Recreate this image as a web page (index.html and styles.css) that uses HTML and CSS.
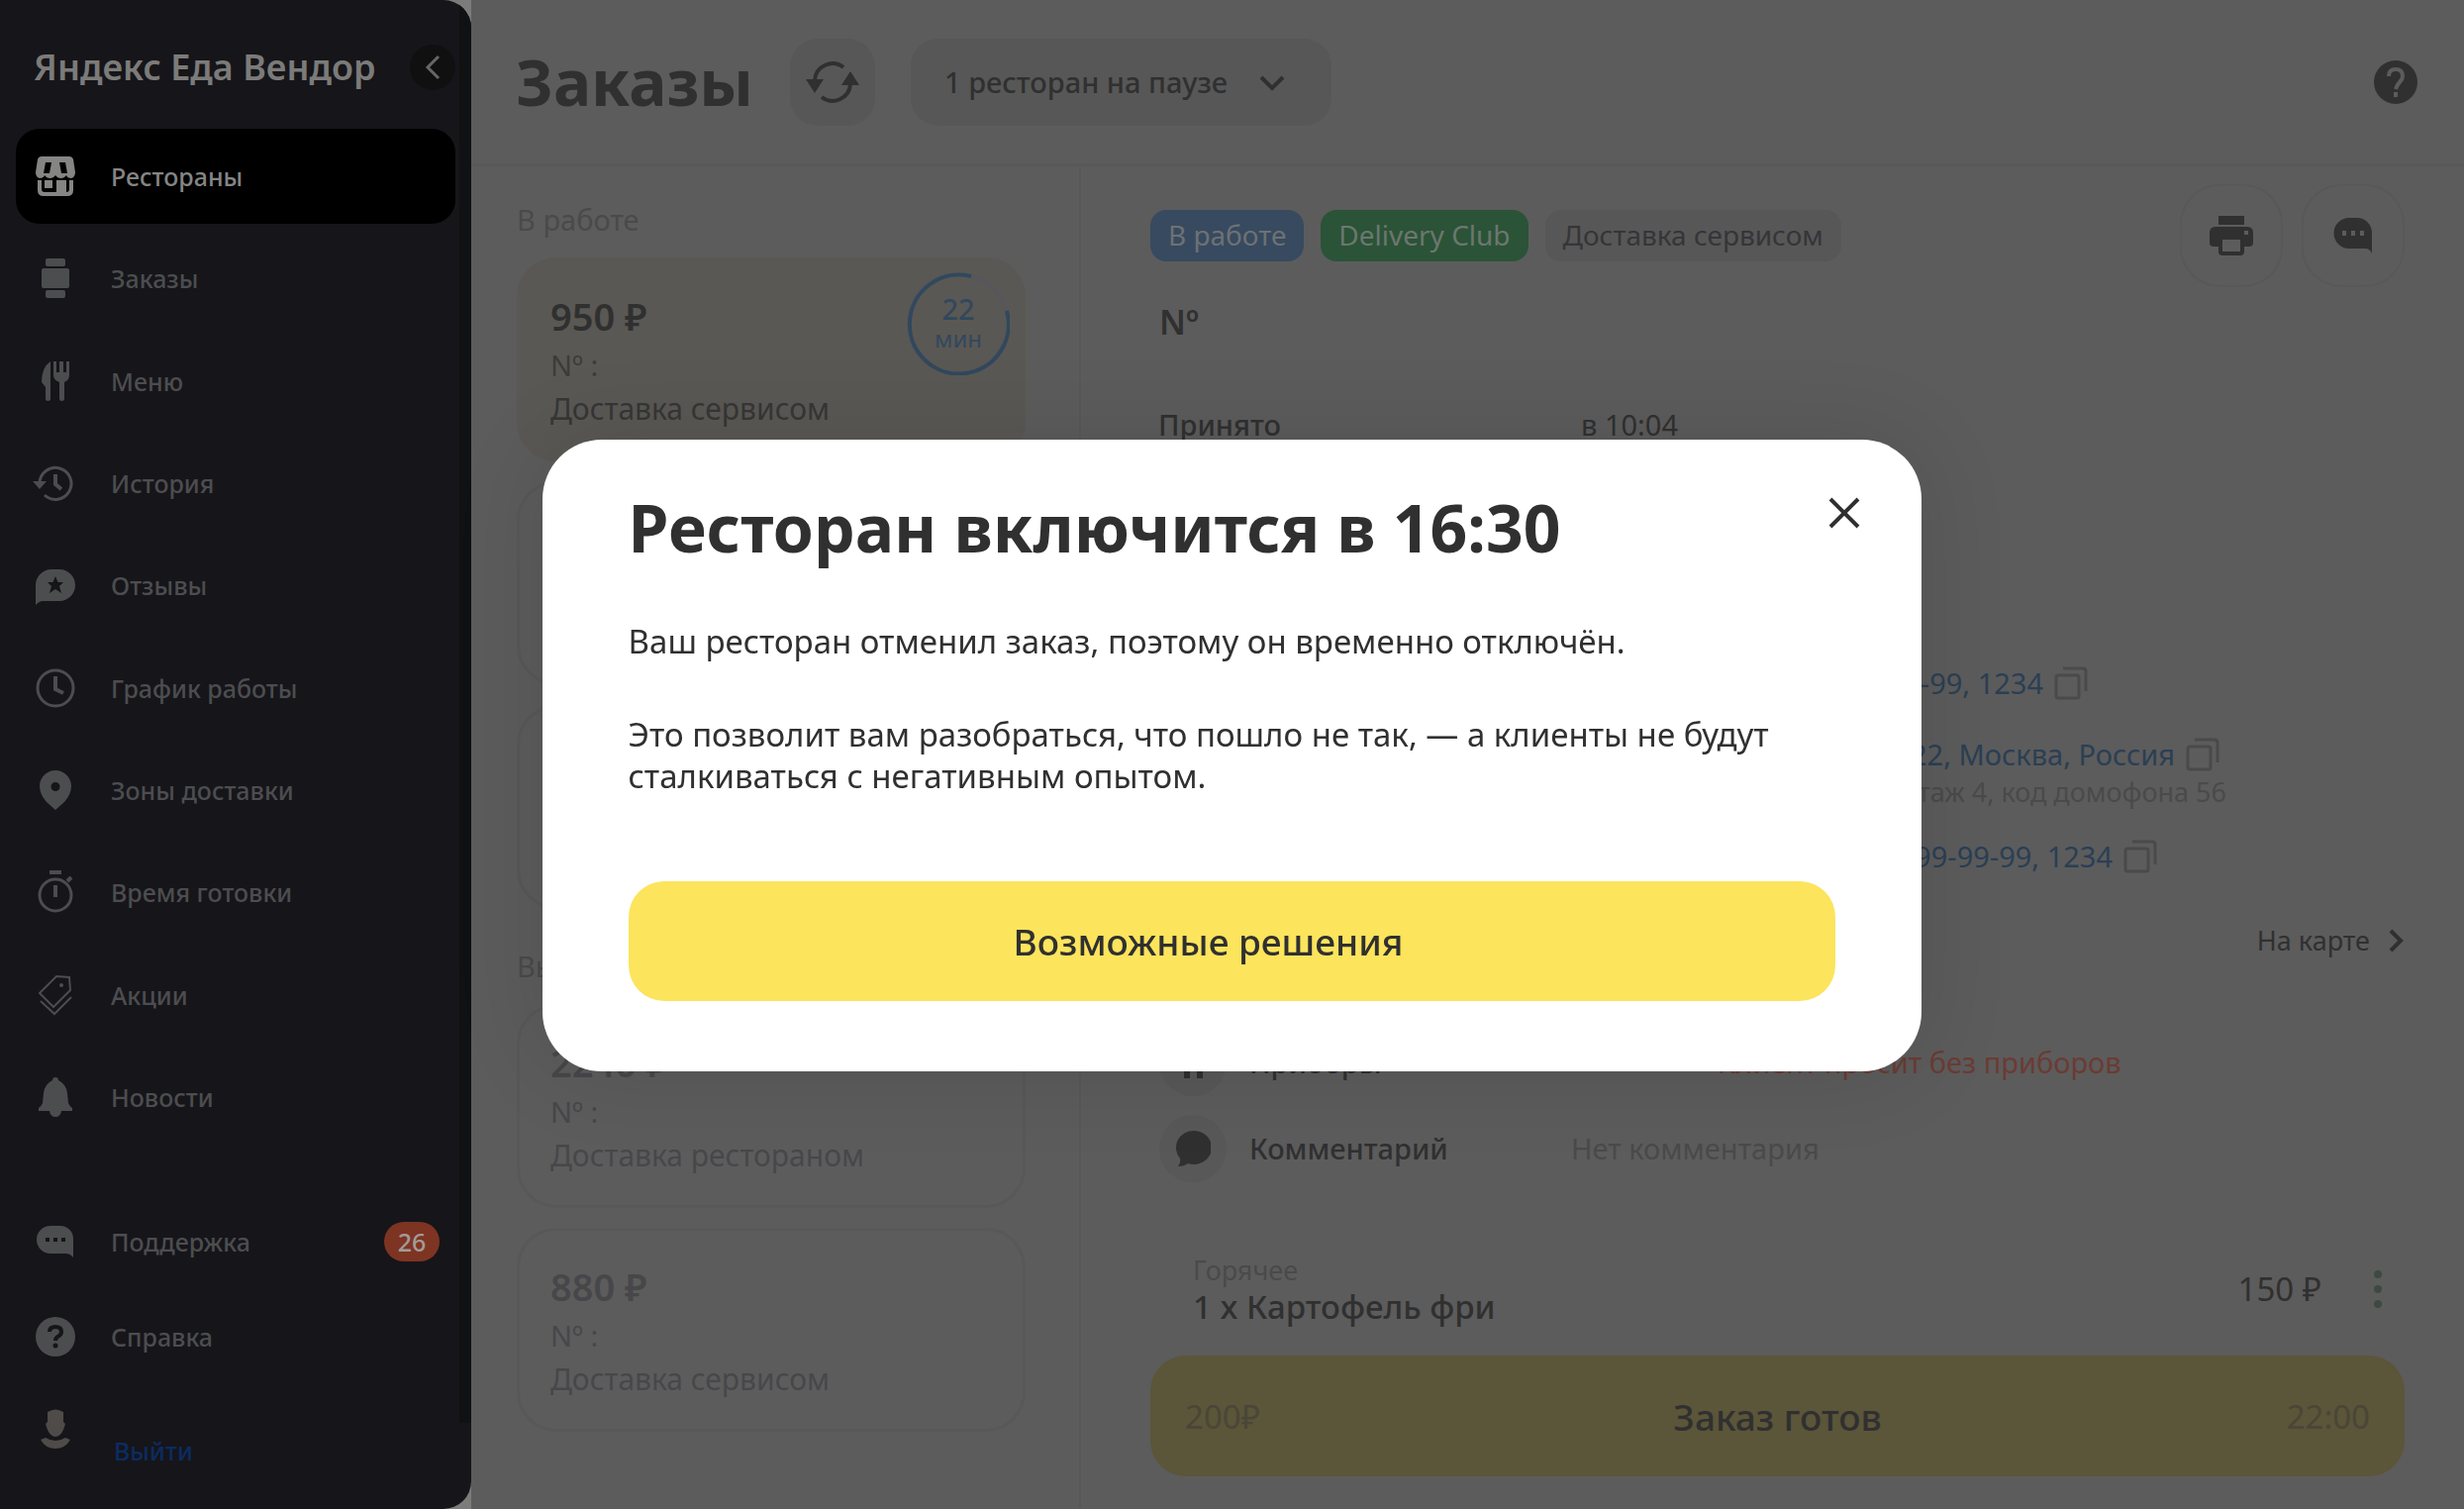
FILE: index.html
```html
<!DOCTYPE html>
<html lang="ru">
<head>
  <meta charset="UTF-8" />
  <meta name="viewport" content="width=device-width, initial-scale=1.0" />
  <title>Яндекс Еда Вендор - Заказы</title>
  <link rel="stylesheet" href="styles.css">
</head>
<body>
<div class="app">

  <div class="sidebar-wrap">
  <aside class="sidebar">
    <div class="sidebar-head">
      <span class="brand">Яндекс Еда Вендор</span>
      <button class="collapse" aria-label="Свернуть меню">
        <svg width="16" height="26" viewBox="0 0 16 26" fill="none" stroke="currentColor" stroke-width="3"><path d="M14 2L3 13l11 11"/></svg>
      </button>
    </div>

    <nav class="menu">
      <a href="#" class="menu-item active">
        <svg class="icon" viewBox="0 0 40 40" fill="currentColor"><path fill-rule="evenodd" d="M6 0h28q3 0 4 3l2 13q0 5-4 6-4 0-5-3-2 3-5.500 3T20 19q-2 3-5.500 3T9 19q-1 3-5 3-4-1-4-6L2 3q1-3 4-3zM10 6L8 17h6l2-11zM24 6l2 11h6L30 6z"/><path fill-rule="evenodd" d="M2 24h4v9q0 3 3 3h12V24h10v12q3 0 3-3v-9h4v10q0 6-6 6H8q-6 0-6-6z"/><path d="M9 24h8v8H9z"/></svg>
        <span>Рестораны</span>
      </a>
      <a href="#" class="menu-item">
        <svg class="icon" viewBox="0 0 40 40" fill="currentColor"><rect x="10" y="0" width="20" height="8" rx="2"/><rect x="6" y="10" width="28" height="20" rx="2"/><rect x="10" y="32" width="20" height="8" rx="2"/></svg>
        <span>Заказы</span>
      </a>
      <a href="#" class="menu-item">
        <svg class="icon" viewBox="0 0 40 40" fill="currentColor"><path d="M15 0v38q0 2-2.500 2T10 38V26l-4-5Q6 6 15 0z"/><path d="M18 0h3v11h3V0h4v11h3V0h3v14q0 5-5 7v17q0 2-2.500 2T24 38V21q-6-2-6-7z"/></svg>
        <span>Меню</span>
      </a>
      <a href="#" class="menu-item">
        <svg class="icon" viewBox="0 0 40 40" fill="none" stroke="currentColor" stroke-width="3"><path d="M4 20a16 16 0 1 1 5 12"/><path d="M20 11v10l6 5" stroke-width="4"/><path d="M-3 18h14l-7 8z" fill="currentColor" stroke="none"/></svg>
        <span>История</span>
      </a>
      <a href="#" class="menu-item">
        <svg class="icon" viewBox="0 0 40 40" fill="currentColor"><path fill-rule="evenodd" d="M16 4h8a16 16 0 0 1 0 32H7q-3 0-7 4V20A16 16 0 0 1 16 4zM20 11l-2.500 6H12l4 4-2 7 6-4 6 4-2-7 4-4h-5.500z"/></svg>
        <span>Отзывы</span>
      </a>
      <a href="#" class="menu-item">
        <svg class="icon" viewBox="0 0 40 40" fill="none" stroke="currentColor" stroke-width="3"><circle cx="20" cy="20" r="18"/><path d="M20 8v13l8 4" stroke-width="4"/></svg>
        <span>График работы</span>
      </a>
      <a href="#" class="menu-item">
        <svg class="icon" viewBox="0 0 40 40" fill="currentColor"><path fill-rule="evenodd" d="M20 0a16 16 0 0 1 16 16q0 8-7 16l-9 8-9-8Q4 24 4 16A16 16 0 0 1 20 0zm0 12a4.500 4.500 0 1 0 0 9 4.500 4.500 0 0 0 0-9z"/></svg>
        <span>Зоны доставки</span>
      </a>
      <a href="#" class="menu-item">
        <svg class="icon" viewBox="0 0 40 40" fill="none" stroke="currentColor" stroke-width="3"><circle cx="20" cy="23" r="16"/><path d="M20 13v12M14 0h12M32 9l4-4" stroke-width="4"/></svg>
        <span>Время готовки</span>
      </a>
      <a href="#" class="menu-item">
        <svg class="icon" viewBox="0 0 40 40" fill="none" stroke="currentColor" stroke-width="2"><path d="M21 1l13 1 1 13-17 17L4 18z"/><path d="M5 26l14 13 17-17"/><circle cx="26" cy="10" r="2" fill="currentColor" stroke="none"/></svg>
        <span>Акции</span>
      </a>
      <a href="#" class="menu-item">
        <svg class="icon" viewBox="0 0 40 40" fill="currentColor"><path d="M20 0q3 0 3 3 8 4 9 13l1 10q1 3 4 5v3H26q-1 6-6 6t-6-6H3v-3q3-2 4-5l1-10q1-9 9-13 0-3 3-3z"/></svg>
        <span>Новости</span>
      </a>
    </nav>

    <div class="menu-bottom">
      <a href="#" class="menu-item">
        <svg class="icon" viewBox="0 0 40 40" fill="currentColor"><path fill-rule="evenodd" d="M15 4h10a13 13 0 0 1 13 13v19q-3-4-8-4H15A14 14 0 0 1 15 4zM10 16v4h4v-4zm8 0v4h4v-4zm8 0v4h4v-4z"/></svg>
        <span>Поддержка</span>
        <span class="count">26</span>
      </a>
      <a href="#" class="menu-item">
        <svg class="icon" viewBox="0 0 40 40"><circle cx="20" cy="20" r="20" fill="currentColor"/><path d="M14 15q0-5 6-5t6 5q0 3-3 4.500T20 24" fill="none" stroke="#16151a" stroke-width="4"/><circle cx="20" cy="29" r="2.500" fill="#16151a"/></svg>
        <span>Справка</span>
      </a>
      <a href="#" class="menu-item logout">
        <svg class="icon" viewBox="0 0 40 40" fill="currentColor"><path d="M12 3q8-5 16 0v10l2 2-2 6q-3 7-8 7t-8-7l-2-6 2-2z"/><path d="M5 31l5-2q10 6 20 0l5 2q-5 9-15 9T5 31z"/></svg>
        <span>Выйти</span>
      </a>
    </div>
  </aside>
  </div>

  <main class="main">
    <header class="topbar">
      <h1>Заказы</h1>
      <button class="refresh" aria-label="Обновить">
        <svg width="54" height="42" viewBox="0 0 54 42" fill="none" stroke="currentColor" stroke-width="4"><path d="M9 19A18 18 0 0 1 38 6M45 23a18 18 0 0 1-29 13"/><path d="M0 18h18l-9 14zM36 24h18L45 10z" fill="currentColor" stroke="none"/></svg>
      </button>
      <div class="pause">
        <select aria-label="Рестораны на паузе">
          <option>1 ресторан на паузе</option>
        </select>
        <svg width="26" height="18" viewBox="0 0 26 18" fill="none" stroke="currentColor" stroke-width="4"><path d="M2 3l11 11L24 3"/></svg>
      </div>
      <button class="help" aria-label="Помощь">
        <svg width="44" height="44" viewBox="0 0 44 44"><circle cx="22" cy="22" r="22" fill="#303030"/><path d="M15 16q0-7 7-7t7 7q0 3-3 6t-4 7" fill="none" stroke="#5c5c5c" stroke-width="4"/><path d="M20 32h4v5h-4z" fill="#5c5c5c"/></svg>
      </button>
    </header>

    <div class="content">
      <section class="orders">
        <h2>В работе</h2>
        <article class="card selected">
          <p class="price">950 ₽</p>
          <p class="num">Nº :</p>
          <p class="delivery">Доставка сервисом</p>
          <div class="timer">
            <svg viewBox="0 0 104 104" fill="none" stroke-width="4"><circle cx="52" cy="52" r="50" stroke="#55575a"/><path d="M101 39A50 50 0 1 1 65 4" stroke="#31485d"/></svg>
            <b>22</b>
            <span>мин</span>
          </div>
        </article>
        <article class="card"></article>
        <article class="card"></article>
        <h2 class="next">Выданы</h2>
        <article class="card muted">
          <p class="price">2240 ₽</p>
          <p class="num">Nº :</p>
          <p class="delivery">Доставка рестораном</p>
        </article>
        <article class="card muted">
          <p class="price">880 ₽</p>
          <p class="num">Nº :</p>
          <p class="delivery">Доставка сервисом</p>
        </article>
      </section>

      <section class="details">
        <div class="details-head">
          <span class="tag blue">В работе</span>
          <span class="tag green">Delivery Club</span>
          <span class="tag">Доставка сервисом</span>
          <div class="actions">
            <button aria-label="Печать">
              <svg width="44" height="40" viewBox="0 0 44 40" fill="currentColor"><path d="M9 0h26v9H9z"/><path fill-rule="evenodd" d="M6 11h32q6 0 6 6v10q0 4-4 4h-5v5q0 4-4 4H13q-4 0-4-4v-5H4q-4 0-4-4V17q0-6 6-6zm7 13v12h18V24zm22-9v4h4v-4z"/></svg>
            </button>
            <button aria-label="Чат">
              <svg width="40" height="36" viewBox="0 0 40 36" fill="currentColor"><path fill-rule="evenodd" d="M16 0h8a15 15 0 0 1 15 15v21q-2-5-7-5H16A15.500 15.500 0 0 1 16 0zM9 13v5h4v-5zm9 0v5h4v-5zm9 0v5h4v-5z"/></svg>
            </button>
          </div>
        </div>

        <h3>Nº</h3>
        <div class="status">
          <span class="status-name">Принято</span>
          <span>в 10:04</span>
        </div>

        <div class="contacts">
          <div class="contact">
            <a href="#" class="phone">+7 999 999-99-99, 1234</a>
            <button class="copy" aria-label="Скопировать"><svg width="34" height="34" viewBox="0 0 34 34" fill="none" stroke="currentColor" stroke-width="3"><rect x="2" y="9" width="23" height="23" rx="2"/><path d="M9 2h20q3 0 3 3v20"/></svg></button>
          </div>
          <div class="contact">
            <a href="#" class="address">улица Льва Толстого, 22, Москва, Россия</a>
            <button class="copy" aria-label="Скопировать"><svg width="34" height="34" viewBox="0 0 34 34" fill="none" stroke="currentColor" stroke-width="3"><rect x="2" y="9" width="23" height="23" rx="2"/><path d="M9 2h20q3 0 3 3v20"/></svg></button>
          </div>
          <p class="entrance">подъезд 3, этаж 4, код домофона 56</p>
          <div class="contact">
            <a href="#" class="courier">+7 999 999-99-99, 1234</a>
            <button class="copy" aria-label="Скопировать"><svg width="34" height="34" viewBox="0 0 34 34" fill="none" stroke="currentColor" stroke-width="3"><rect x="2" y="9" width="23" height="23" rx="2"/><path d="M9 2h20q3 0 3 3v20"/></svg></button>
          </div>
        </div>

        <a href="#" class="map-link">На карте
          <svg width="16" height="24" viewBox="0 0 16 24" fill="none" stroke="currentColor" stroke-width="4"><path d="M2 2l10 10L2 22"/></svg>
        </a>

        <div class="note">
          <span class="round"><svg width="28" height="32" viewBox="0 0 28 32" fill="currentColor"><path d="M5 0h6v32H5zM18 0h6v32h-6z"/></svg></span>
          <span class="note-label">Приборы</span>
          <span class="note-value red">Клиент просит без приборов</span>
        </div>
        <div class="note">
          <span class="round"><svg width="36" height="36" viewBox="0 0 36 36" fill="currentColor"><path d="M18 0a18 17 0 1 1-5 33q-4 3-10 3 3-4 2-8A17 17 0 0 1 18 0z"/></svg></span>
          <span class="note-label">Комментарий</span>
          <span class="note-value">Нет комментария</span>
        </div>

        <div class="item">
          <div>
            <p class="category">Горячее</p>
            <p class="name">1 x Картофель фри</p>
          </div>
          <span class="item-price">150 ₽</span>
          <button class="more" aria-label="Ещё"><svg width="10" height="40" viewBox="0 0 10 40" fill="currentColor"><circle cx="5" cy="5" r="4"/><circle cx="5" cy="20" r="4"/><circle cx="5" cy="35" r="4"/></svg></button>
        </div>

        <button class="ready">
          <span>200₽</span>
          <strong>Заказ готов</strong>
          <span>22:00</span>
        </button>
      </section>
    </div>
  </main>
</div>

<div class="overlay">
  <div class="modal" role="dialog" aria-labelledby="modal-title">
    <button class="close" aria-label="Закрыть"><svg width="32" height="32" viewBox="0 0 32 32" fill="none" stroke="currentColor" stroke-width="4"><path d="M2 2l28 28M30 2L2 30"/></svg></button>
    <h2 id="modal-title">Ресторан включится в 16:30</h2>
    <p>Ваш ресторан отменил заказ, поэтому он временно отключён.</p>
    <p>Это позволит вам разобраться, что пошло не так, — а клиенты не будут сталкиваться с негативным опытом.</p>
    <button class="solutions">Возможные решения</button>
  </div>
</div>
</body>
</html>
```
FILE: styles.css
```css
* {
  box-sizing: border-box;
}
body {
  margin: 0;
  font-family: "Noto Sans", "Open Sans", sans-serif;
  font-size: 29px;
  line-height: 40px;
  background: #5c5c5c;
  color: #303030;
}
h1, h2, h3, p {
  margin: 0;
}
a {
  text-decoration: none;
  color: inherit;
}
button, select {
  font-family: inherit;
  color: inherit;
  border: 0;
  background: none;
  padding: 0;
}
svg {
  display: block;
}
.app {
  display: flex;
  min-height: 100vh;
}

/* sidebar */
.sidebar-wrap {
  flex: none;
  width: 476px;
  background: #7c7c7b;
}
.sidebar {
  position: relative;
  display: flex;
  flex-direction: column;
  height: 100%;
  padding: 0 16px;
  background: #16151a;
  border-radius: 0 28px 28px 0;
  overflow: hidden;
}
.sidebar::after {
  content: "";
  position: absolute;
  top: 0;
  right: 0;
  bottom: 87px;
  width: 12px;
  background: #101112;
}
.sidebar-head, .menu, .menu-bottom {
  width: 444px;
}
.sidebar-head {
  display: flex;
  align-items: center;
  justify-content: space-between;
  height: 130px;
  padding: 6px 0 0 18px;
}
.brand {
  font-size: 36px;
  font-weight: 600;
  color: #7b7b79;
}
.collapse {
  display: flex;
  align-items: center;
  justify-content: center;
  width: 46px;
  height: 46px;
  border-radius: 50%;
  background: #101010;
  color: #66666a;
}
.menu {
  display: flex;
  flex: 1;
  flex-direction: column;
  justify-content: space-between;
  margin-bottom: 50px;
}
.menu-item {
  display: flex;
  align-items: center;
  height: 96px;
  padding: 0 16px 0 20px;
  border-radius: 24px;
  font-size: 25px;
  font-weight: 500;
  color: #4c4d4f;
}
.menu-item.active {
  background: #000;
  color: #858584;
}
.icon {
  width: 40px;
  height: 40px;
  margin-right: 36px;
  overflow: visible;
}
.count {
  width: 56px;
  margin-left: auto;
  border-radius: 20px;
  background: #7e3422;
  color: #a39b98;
  text-align: center;
}
.menu-item.logout {
  align-items: flex-start;
  height: 126px;
  padding-top: 25px;
  color: #4f4b49;
}
.logout span {
  margin-top: 22px;
  padding-left: 3px;
  color: #0b2c60;
}

/* top bar */
.main {
  display: flex;
  flex: 1;
  flex-direction: column;
}
.topbar {
  display: flex;
  align-items: center;
  height: 168px;
  padding: 0 47px 0 45px;
  border-bottom: 3px solid #575957;
}
h1 {
  margin-right: 37px;
  font-size: 64px;
  font-weight: 700;
}
.refresh {
  display: flex;
  align-items: center;
  justify-content: center;
  width: 86px;
  height: 88px;
  margin-right: 36px;
  border-radius: 28px;
  background: #575757;
}
.pause {
  position: relative;
}
.pause select {
  height: 88px;
  padding: 0 104px 0 34px;
  border-radius: 28px;
  background: #575757;
  font-size: 29px;
  font-weight: 500;
  appearance: none;
}
.pause svg {
  position: absolute;
  top: 36px;
  right: 47px;
  pointer-events: none;
}
.help {
  margin-left: auto;
}
.content {
  display: flex;
  flex: 1;
}

/* orders list */
.orders {
  flex: none;
  width: 616px;
  padding: 34px 54px 0 46px;
  border-right: 2px solid #575957;
}
.orders h2 {
  margin-bottom: 18px;
  font-size: 29px;
  font-weight: 400;
  color: #4a4a4a;
}
.orders .next {
  margin-top: 38px;
}
.card {
  position: relative;
  height: 206px;
  padding: 31px;
  border: 3px solid #575957;
  border-radius: 40px;
}
.card + .card {
  margin-top: 20px;
}
.card.selected {
  background: #5a5854;
  border-color: #5a5854;
}
.price {
  font-size: 38px;
  font-weight: 600;
  line-height: 50px;
}
.num {
  line-height: 50px;
  color: #3c3c3a;
}
.delivery {
  font-size: 30px;
  line-height: 38px;
  color: #363636;
}
.muted p {
  color: #47474a;
}
.timer {
  position: absolute;
  top: 12px;
  right: 13px;
  display: flex;
  flex-direction: column;
  align-items: center;
  width: 104px;
  height: 104px;
  padding-top: 20px;
  color: #31485d;
}
.timer svg {
  position: absolute;
  top: 0;
  left: 0;
  width: 104px;
}
.timer b {
  font-weight: 500;
  line-height: 34px;
}
.timer span {
  font-size: 24px;
  line-height: 26px;
}

/* order details */
.details {
  display: flex;
  flex: 1;
  flex-direction: column;
  padding: 18px 60px 33px 70px;
}
.details-head {
  display: flex;
  align-items: center;
  gap: 17px;
}
.tag {
  height: 52px;
  padding: 0 18px;
  border-radius: 16px;
  background: #575757;
  font-size: 28px;
  line-height: 50px;
  color: #353538;
}
.tag.blue {
  background: #374a5f;
  color: #6d7175;
}
.tag.green {
  background: #2b5337;
  color: #6c776f;
}
.actions {
  display: flex;
  gap: 19px;
  margin-left: auto;
}
.actions button {
  display: flex;
  align-items: center;
  justify-content: center;
  width: 104px;
  height: 104px;
  border: 2px solid #575957;
  border-radius: 40px;
}
h3 {
  margin-top: 10px;
  padding-left: 9px;
  font-size: 34px;
  font-weight: 600;
  line-height: 50px;
}
.status {
  display: grid;
  grid-template-columns: 427px 1fr;
  margin-top: 59px;
  padding-left: 8px;
}
.status-name {
  font-weight: 500;
}
.contacts {
  margin-top: 221px;
  padding-left: 426px;
  color: #2b3f54;
}
.contact {
  display: flex;
  align-items: center;
  gap: 11px;
  height: 40px;
  margin-bottom: 32px;
}
.contact a {
  text-align: right;
  white-space: nowrap;
}
.phone {
  width: 476px;
}
.address {
  width: 609px;
}
.courier {
  width: 546px;
}
.copy {
  color: #4a4a4a;
}
.entrance {
  width: 661px;
  margin: -30px 0 29px;
  font-size: 27px;
  line-height: 32px;
  text-align: right;
  color: #4a4a4a;
}
.map-link {
  display: flex;
  align-items: center;
  align-self: flex-end;
  gap: 19px;
  margin-top: 13px;
  font-size: 27px;
}
.note {
  display: grid;
  grid-template-columns: 68px 302px 1fr;
  align-items: center;
  column-gap: 23px;
  margin: 19px 0 0 9px;
}
.map-link + .note {
  margin-top: 69px;
}
.round {
  display: flex;
  align-items: center;
  justify-content: center;
  width: 68px;
  height: 68px;
  border-radius: 50%;
  background: #585858;
}
.note-label {
  font-weight: 500;
}
.note-value {
  color: #4a4a4a;
}
.note-value.red {
  padding-left: 148px;
  color: #6b3b34;
}
.item {
  display: flex;
  align-items: center;
  margin-top: 71px;
  padding: 0 22px 0 43px;
}
.category {
  font-size: 27px;
  line-height: 36px;
  color: #4a4a4a;
}
.name {
  font-size: 33px;
  font-weight: 500;
  line-height: 38px;
}
.item-price {
  margin: 0 52px 0 auto;
  font-size: 33px;
}
.more {
  color: #3d4a41;
}
.ready {
  display: grid;
  grid-template-columns: 1fr auto 1fr;
  align-items: center;
  height: 122px;
  margin-top: auto;
  padding: 0 35px;
  border-radius: 36px;
  background: #5b5539;
  font-size: 33px;
  text-align: left;
  color: #4a4637;
}
.ready strong {
  font-size: 37px;
  font-weight: 500;
  color: #303030;
}
.ready span:last-child {
  text-align: right;
}

/* modal */
.overlay {
  position: fixed;
  inset: 0;
  display: flex;
  align-items: center;
  justify-content: center;
  padding-top: 2px;
}
.modal {
  position: relative;
  width: 56%;
  padding: 48px 87px 71px;
  border-radius: 60px;
  background: #fff;
  box-shadow: 0 0 90px rgba(0, 0, 0, 0.12);
}
.modal h2 {
  margin-bottom: 55px;
  font-size: 66px;
  font-weight: 700;
  line-height: 80px;
}
.modal p {
  margin-bottom: 52px;
  font-size: 33px;
  line-height: 42px;
}
.close {
  position: absolute;
  top: 58px;
  right: 62px;
}
.solutions {
  display: block;
  width: 100%;
  height: 121px;
  margin-top: 85px;
  padding-right: 48px;
  border-radius: 36px;
  background: #fce45c;
  font-size: 37px;
  font-weight: 500;
}
```
